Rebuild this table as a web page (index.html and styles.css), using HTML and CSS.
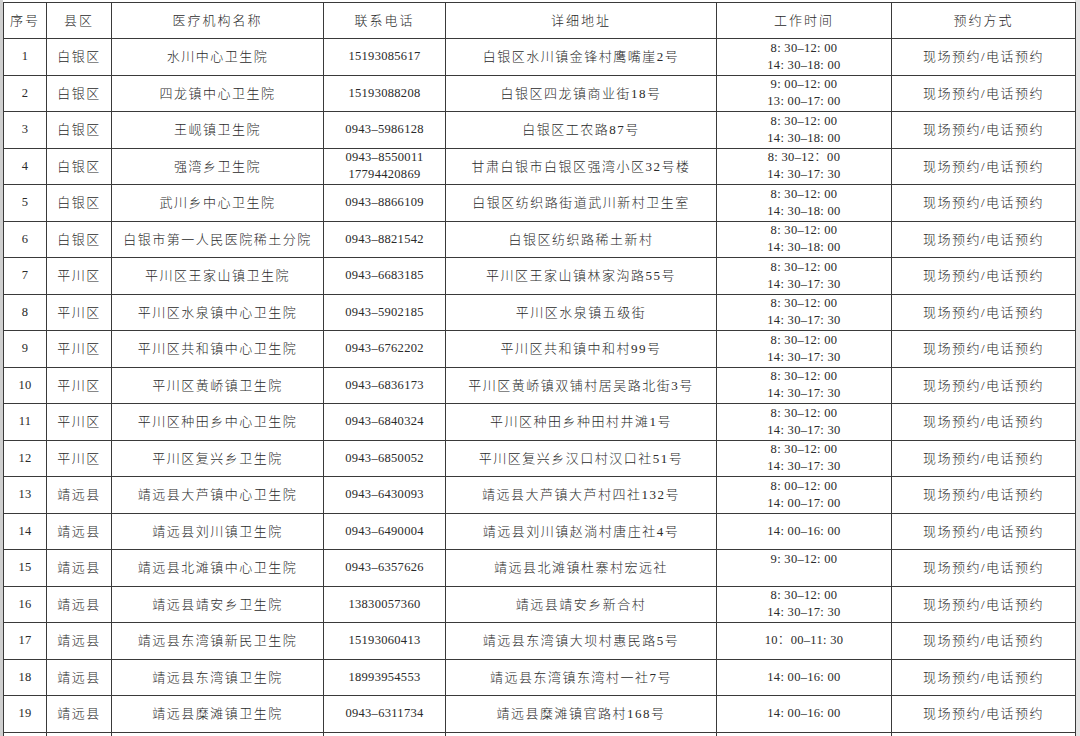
FILE: index.html
```html
<!DOCTYPE html>
<html lang="zh-CN">
<head>
<meta charset="utf-8">
<title>预约表</title>
<link rel="stylesheet" href="styles.css">
</head>
<body>
<div class="page">
<table class="grid">
<colgroup>
<col class="c-no"><col class="c-area"><col class="c-name"><col class="c-tel"><col class="c-addr"><col class="c-time"><col class="c-way">
</colgroup>
<thead>
<tr class="head"><th>序号</th><th>县区</th><th>医疗机构名称</th><th>联系电话</th><th>详细地址</th><th>工作时间</th><th>预约方式</th></tr>
</thead>
<tbody>
<tr><td class="num">1</td><td>白银区</td><td>水川中心卫生院</td><td class="num">15193085617</td><td>白银区水川镇金锋村鹰嘴崖2号</td><td class="num">8: 30–12: 00<br>14: 30–18: 00</td><td>现场预约/电话预约</td></tr>
<tr><td class="num">2</td><td>白银区</td><td>四龙镇中心卫生院</td><td class="num">15193088208</td><td>白银区四龙镇商业街18号</td><td class="num">9: 00–12: 00<br>13: 00–17: 00</td><td>现场预约/电话预约</td></tr>
<tr><td class="num">3</td><td>白银区</td><td>王岘镇卫生院</td><td class="num">0943–5986128</td><td>白银区工农路87号</td><td class="num">8: 30–12: 00<br>14: 30–18: 00</td><td>现场预约/电话预约</td></tr>
<tr><td class="num">4</td><td>白银区</td><td>强湾乡卫生院</td><td class="num">0943–8550011<br>17794420869</td><td>甘肃白银市白银区强湾小区32号楼</td><td class="num">8: 30–12：00<br>14: 30–17: 30</td><td>现场预约/电话预约</td></tr>
<tr><td class="num">5</td><td>白银区</td><td>武川乡中心卫生院</td><td class="num">0943–8866109</td><td>白银区纺织路街道武川新村卫生室</td><td class="num">8: 30–12: 00<br>14: 30–18: 00</td><td>现场预约/电话预约</td></tr>
<tr><td class="num">6</td><td>白银区</td><td>白银市第一人民医院稀土分院</td><td class="num">0943–8821542</td><td>白银区纺织路稀土新村</td><td class="num">8: 30–12: 00<br>14: 30–18: 00</td><td>现场预约/电话预约</td></tr>
<tr><td class="num">7</td><td>平川区</td><td>平川区王家山镇卫生院</td><td class="num">0943–6683185</td><td>平川区王家山镇林家沟路55号</td><td class="num">8: 30–12: 00<br>14: 30–17: 30</td><td>现场预约/电话预约</td></tr>
<tr><td class="num">8</td><td>平川区</td><td>平川区水泉镇中心卫生院</td><td class="num">0943–5902185</td><td>平川区水泉镇五级街</td><td class="num">8: 30–12: 00<br>14: 30–17: 30</td><td>现场预约/电话预约</td></tr>
<tr><td class="num">9</td><td>平川区</td><td>平川区共和镇中心卫生院</td><td class="num">0943–6762202</td><td>平川区共和镇中和村99号</td><td class="num">8: 30–12: 00<br>14: 30–17: 30</td><td>现场预约/电话预约</td></tr>
<tr><td class="num">10</td><td>平川区</td><td>平川区黄峤镇卫生院</td><td class="num">0943–6836173</td><td>平川区黄峤镇双铺村居吴路北街3号</td><td class="num">8: 30–12: 00<br>14: 30–17: 30</td><td>现场预约/电话预约</td></tr>
<tr><td class="num">11</td><td>平川区</td><td>平川区种田乡中心卫生院</td><td class="num">0943–6840324</td><td>平川区种田乡种田村井滩1号</td><td class="num">8: 30–12: 00<br>14: 30–17: 30</td><td>现场预约/电话预约</td></tr>
<tr><td class="num">12</td><td>平川区</td><td>平川区复兴乡卫生院</td><td class="num">0943–6850052</td><td>平川区复兴乡汉口村汉口社51号</td><td class="num">8: 30–12: 00<br>14: 30–17: 30</td><td>现场预约/电话预约</td></tr>
<tr><td class="num">13</td><td>靖远县</td><td>靖远县大芦镇中心卫生院</td><td class="num">0943–6430093</td><td>靖远县大芦镇大芦村四社132号</td><td class="num">8: 00–12: 00<br>14: 00–17: 00</td><td>现场预约/电话预约</td></tr>
<tr><td class="num">14</td><td>靖远县</td><td>靖远县刘川镇卫生院</td><td class="num">0943–6490004</td><td>靖远县刘川镇赵淌村唐庄社4号</td><td class="num">14: 00–16: 00</td><td>现场预约/电话预约</td></tr>
<tr><td class="num">15</td><td>靖远县</td><td>靖远县北滩镇中心卫生院</td><td class="num">0943–6357626</td><td>靖远县北滩镇杜寨村宏远社</td><td class="num">9: 30–12: 00<br>&nbsp;</td><td>现场预约/电话预约</td></tr>
<tr><td class="num">16</td><td>靖远县</td><td>靖远县靖安乡卫生院</td><td class="num">13830057360</td><td>靖远县靖安乡新合村</td><td class="num">8: 30–12: 00<br>14: 30–17: 30</td><td>现场预约/电话预约</td></tr>
<tr><td class="num">17</td><td>靖远县</td><td>靖远县东湾镇新民卫生院</td><td class="num">15193060413</td><td>靖远县东湾镇大坝村惠民路5号</td><td class="num">10：00–11: 30</td><td>现场预约/电话预约</td></tr>
<tr><td class="num">18</td><td>靖远县</td><td>靖远县东湾镇卫生院</td><td class="num">18993954553</td><td>靖远县东湾镇东湾村一社7号</td><td class="num">14: 00–16: 00</td><td>现场预约/电话预约</td></tr>
<tr><td class="num">19</td><td>靖远县</td><td>靖远县糜滩镇卫生院</td><td class="num">0943–6311734</td><td>靖远县糜滩镇官路村168号</td><td class="num">14: 00–16: 00</td><td>现场预约/电话预约</td></tr>
<tr class="cut"><td></td><td></td><td></td><td></td><td></td><td></td><td></td></tr>
</tbody>
</table>
</div>
</body>
</html>
```
FILE: styles.css
```css
html, body {
  margin: 0;
  padding: 0;
  background: #ffffff;
}
body {
  width: 1080px;
  height: 736px;
  overflow: hidden;
}
.page {
  box-sizing: border-box;
  width: 1080px;
  height: 736px;
  overflow: hidden;
  padding: 2px 0 0 3px;
  background: linear-gradient(to right, #cfcfcf 0, #cfcfcf 3px, #ffffff 3px, #ffffff 1075px, #e4e4e4 1075px);
}
.grid {
  border-collapse: collapse;
  table-layout: fixed;
  width: 1072px;
  font-family: "Liberation Serif", "Noto Sans CJK SC", serif;
  font-weight: 300;
  color: #2a2a2a;
  font-size: 13px;
  letter-spacing: 1.5px;
}
.c-no { width: 43px; }
.c-area { width: 65px; }
.c-name { width: 212px; }
.c-tel { width: 122px; }
.c-addr { width: 271px; }
.c-time { width: 175px; }
.c-way { width: 184px; }
.grid th,
.grid td {
  border: 1px solid #3a3a3a;
  padding: 0;
  text-align: center;
  vertical-align: middle;
  line-height: 17px;
  white-space: nowrap;
  overflow: hidden;
}
.grid th {
  font-weight: 300;
  letter-spacing: 2px;
  height: 35px;
}
.grid tbody tr {
  height: 36.5px;
}
.grid td.num {
  font-size: 12.5px;
  letter-spacing: 0.3px;
}
```
